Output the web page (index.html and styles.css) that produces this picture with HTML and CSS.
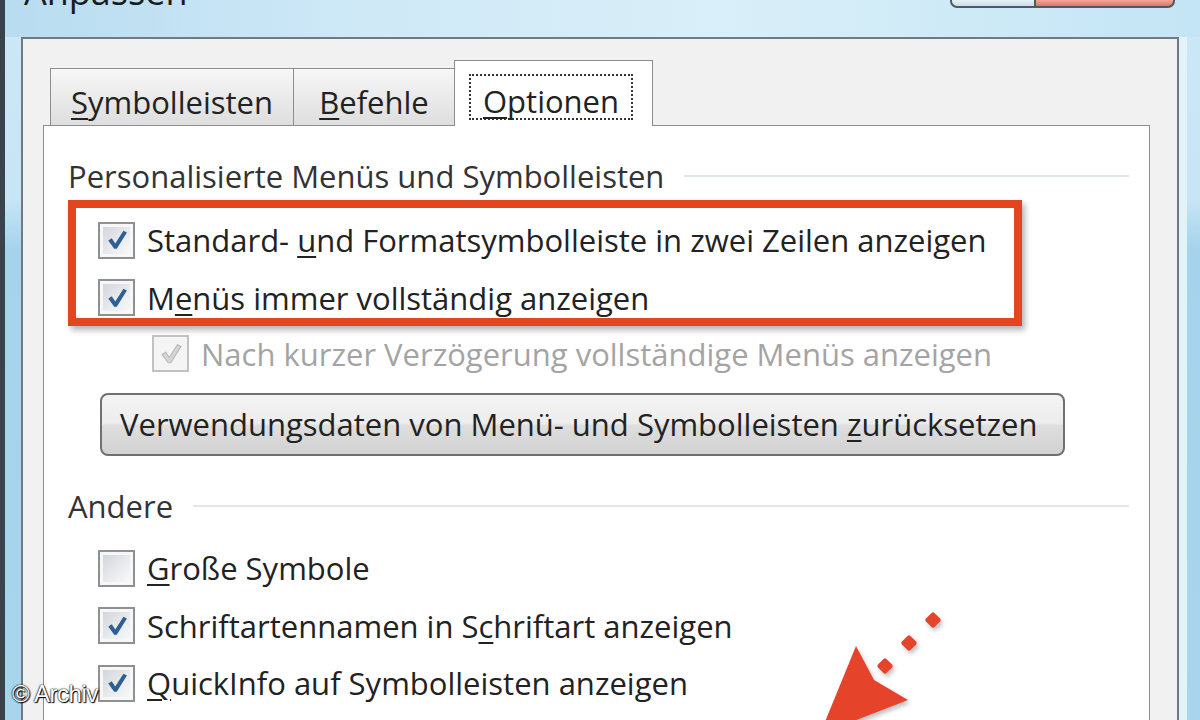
FILE: index.html
```html
<!DOCTYPE html>
<html>
<head>
    <meta charset="utf-8">
    <title>Anpassen</title>

<link rel="stylesheet" href="styles.css">
</head>
<body>
<div class="window">
    <div class="titlebar">
        <span class="title">Anpassen</span>
        <div class="caption-buttons">
            <span class="cap-btn help"></span>
            <span class="cap-btn close"></span>
        </div>
    </div>
    <div class="client">
        <div class="tabs">
            <div class="tab"><u>S</u>ymbolleisten</div>
            <div class="tab"><u>B</u>efehle</div>
            <div class="tab active"><span class="focus"><u>O</u>ptionen</span></div>
        </div>
        <div class="panel">
            <div class="group-head">Personalisierte Menüs und Symbolleisten</div>
            <div class="highlight">
                <div class="check-row">
                    <span class="box"><svg viewBox="0 0 24 24"><polygon points="4.5,12.5 7.5,10.5 10.5,15 17.5,4 20.5,5.5 11.8,19.5 9.6,19.5"/></svg></span>
                    <span>Standard- <u>u</u>nd Formatsymbolleiste in zwei Zeilen anzeigen</span>
                </div>
                <div class="check-row">
                    <span class="box"><svg viewBox="0 0 24 24"><polygon points="4.5,12.5 7.5,10.5 10.5,15 17.5,4 20.5,5.5 11.8,19.5 9.6,19.5"/></svg></span>
                    <span>M<u>e</u>nüs immer vollständig anzeigen</span>
                </div>
            </div>
            <div class="check-row sub disabled">
                <span class="box"><svg viewBox="0 0 24 24"><polygon points="4.5,12.5 7.5,10.5 10.5,15 17.5,4 20.5,5.5 11.8,19.5 9.6,19.5"/></svg></span>
                <span>Nach kurzer Verzögerung vollständige Menüs anzeigen</span>
            </div>
            <button class="push" type="button">Verwendungsdaten von Menü- und Symbolleisten <u>z</u>urücksetzen</button>

            <div class="group-head second">Andere</div>
            <div class="check-list">
                <div class="check-row">
                    <span class="box"></span>
                    <span><u>G</u>roße Symbole</span>
                </div>
                <div class="check-row">
                    <span class="box"><svg viewBox="0 0 24 24"><polygon points="4.5,12.5 7.5,10.5 10.5,15 17.5,4 20.5,5.5 11.8,19.5 9.6,19.5"/></svg></span>
                    <span>Schriftartennamen in S<u>c</u>hriftart anzeigen</span>
                </div>
                <div class="check-row">
                    <span class="box"><svg viewBox="0 0 24 24"><polygon points="4.5,12.5 7.5,10.5 10.5,15 17.5,4 20.5,5.5 11.8,19.5 9.6,19.5"/></svg></span>
                    <span><u>Q</u>uickInfo auf Symbolleisten anzeigen</span>
                </div>
                <div class="check-row sub">
                    <span class="box"></span>
                </div>
            </div>
        </div>
    </div>

    <!-- Markierung -->
    <svg class="arrow" viewBox="0 0 160 120" width="160" height="120">
        <rect x="127" y="14" width="12" height="12" rx="2" transform="rotate(45 133 20)"/>
        <rect x="103" y="37" width="12" height="12" rx="2" transform="rotate(45 109 43)"/>
        <rect x="79" y="60" width="12" height="12" rx="2" transform="rotate(45 85 66)"/>
        <polygon points="20,134 56,46 74,80 108,100"/>
    </svg>
    <div class="credit">© Archiv</div>
</div>
</body>
</html>
```

FILE: styles.css
```css
* {
    margin: 0;
    padding: 0;
    box-sizing: border-box;
}
body {
    font-family: "Open Sans", "Noto Sans", sans-serif;
    color: #222;
}
.window {
    position: relative;
    width: 1200px;
    height: 720px;
    overflow: hidden;
    border-left: 5px solid #3a434c;
    background: linear-gradient(180deg, #cde8f6 0, #c6e5f5 200px, #a4d3eb 250px, #a8d5ec 720px);
}
.titlebar {
    height: 37px;
    display: flex;
    justify-content: space-between;
    padding: 0 25px 0 19px;
    background: linear-gradient(90deg, #b8dcf0 0, #cfe9f7 30%, #d9eff9 60%, #c4e5f5 100%);
}
.title {
    font-size: 36px;
    line-height: 36px;
    margin-top: -26px;
    color: #1b1b1b;
}
.caption-buttons {
    display: flex;
    height: 8px;
}
.cap-btn {
    display: block;
    height: 8px;
    border: 2px solid #4f5a66;
    border-top: none;
}
.cap-btn.help {
    width: 84px;
    border-right: none;
    border-radius: 0 0 0 7px;
    background: linear-gradient(#e6f1f7, #cadfeb);
}
.cap-btn.close {
    width: 141px;
    border-radius: 0 0 7px 0;
    background: linear-gradient(#f2a798, #de7463);
}
.client {
    height: 683px;
    margin: 0 21px 0 16px;
    border: 2px solid #6f7a85;
    border-bottom: none;
    background: #f1f1f1;
    padding: 21px 0 0 20px;
    box-shadow: 8px 0 0 #e4f2fa;
}
.tabs {
    display: flex;
    align-items: flex-end;
    height: 65px;
    padding-left: 7px;
    position: relative;
    z-index: 1;
}
.tab {
    min-width: 162px;
    height: 57px;
    padding: 14px 20px 0;
    line-height: 38px;
    font-size: 31px;
    text-align: center;
    border: 1px solid #8a8d94;
    border-bottom: none;
    margin-right: -1px;
    background: linear-gradient(#f7f7f7, #e9e9e9 55%, #dedede);
}
.tab.active {
    height: 66px;
    margin-bottom: -1px;
    padding: 13px 19px 0 14px;
    background: #fff;
}
.focus {
    display: inline-block;
    height: 46px;
    padding: 6px 12px 0;
    border: 2px dotted #333;
    line-height: 38px;
}
u {
    text-decoration-thickness: 2px;
    text-underline-offset: 4px;
}
.panel {
    height: 620px;
    margin-right: 27px;
    background: #fff;
    border: 1px solid #8a8d94;
    padding: 32px 20px 0 24px;
}
.group-head {
    display: flex;
    align-items: center;
    font-size: 31px;
    line-height: 36px;
    color: #333;
}
.group-head::after {
    content: "";
    flex: 1;
    margin-left: 20px;
    border-top: 2px solid #e0e5ea;
}
.group-head.second {
    margin-top: 32px;
}
.highlight {
    width: 954px;
    margin-top: 6px;
    border: 8px solid #e2461f;
    padding: 12px 0 0 22px;
    box-shadow: 3px 4px 6px rgba(0, 0, 0, 0.3);
}
.check-row {
    display: flex;
    align-items: center;
    gap: 12px;
    height: 40px;
    font-size: 31px;
}
.check-row + .check-row {
    margin-top: 17.5px;
}
.box {
    width: 37px;
    height: 37px;
    flex: none;
    display: flex;
    align-items: center;
    justify-content: center;
    border: 2px solid #8e9094;
    background: linear-gradient(135deg, #cdd1d6 0, #e9ebee 55%, #fbfbfb 100%);
    box-shadow: inset 0 0 0 3px #f7f7f7;
}
.box svg {
    width: 28px;
    height: 28px;
    fill: #2d5f92;
}
.check-row.sub {
    padding-left: 84px;
}
.check-list .check-row.sub {
    padding-left: 54px;
}
.highlight + .check-row {
    margin-top: 8px;
}
.disabled {
    color: #a4a4a4;
}
.disabled .box {
    border-color: #c2c2c2;
    background: #f4f4f4;
    box-shadow: none;
}
.disabled .box svg {
    fill: #d6d6d6;
    stroke: #b9b9b9;
    stroke-width: 1;
}
.push {
    display: block;
    height: 63px;
    margin: 19px 0 0 32px;
    padding: 0 26px 0 18px;
    font-family: inherit;
    font-size: 31px;
    color: #222;
    border: 2px solid #707070;
    border-radius: 8px;
    background: linear-gradient(#f4f4f4 0, #ececec 48%, #dedede 52%, #d2d2d2 100%);
}
.check-list {
    margin-top: 24.5px;
    padding-left: 30px;
}
.arrow {
    position: absolute;
    left: 795px;
    top: 600px;
    fill: #e5432a;
    filter: drop-shadow(2px 3px 2px rgba(0, 0, 0, 0.25));
}
.credit {
    position: absolute;
    left: 7px;
    top: 680px;
    font-family: "Liberation Sans", Arial, sans-serif;
    font-size: 24px;
    letter-spacing: -0.5px;
    line-height: 28px;
    color: #fff;
    text-shadow: 0 0 2px #000, 1px 1px 1px #000, 0 0 1px #000;
}
```
